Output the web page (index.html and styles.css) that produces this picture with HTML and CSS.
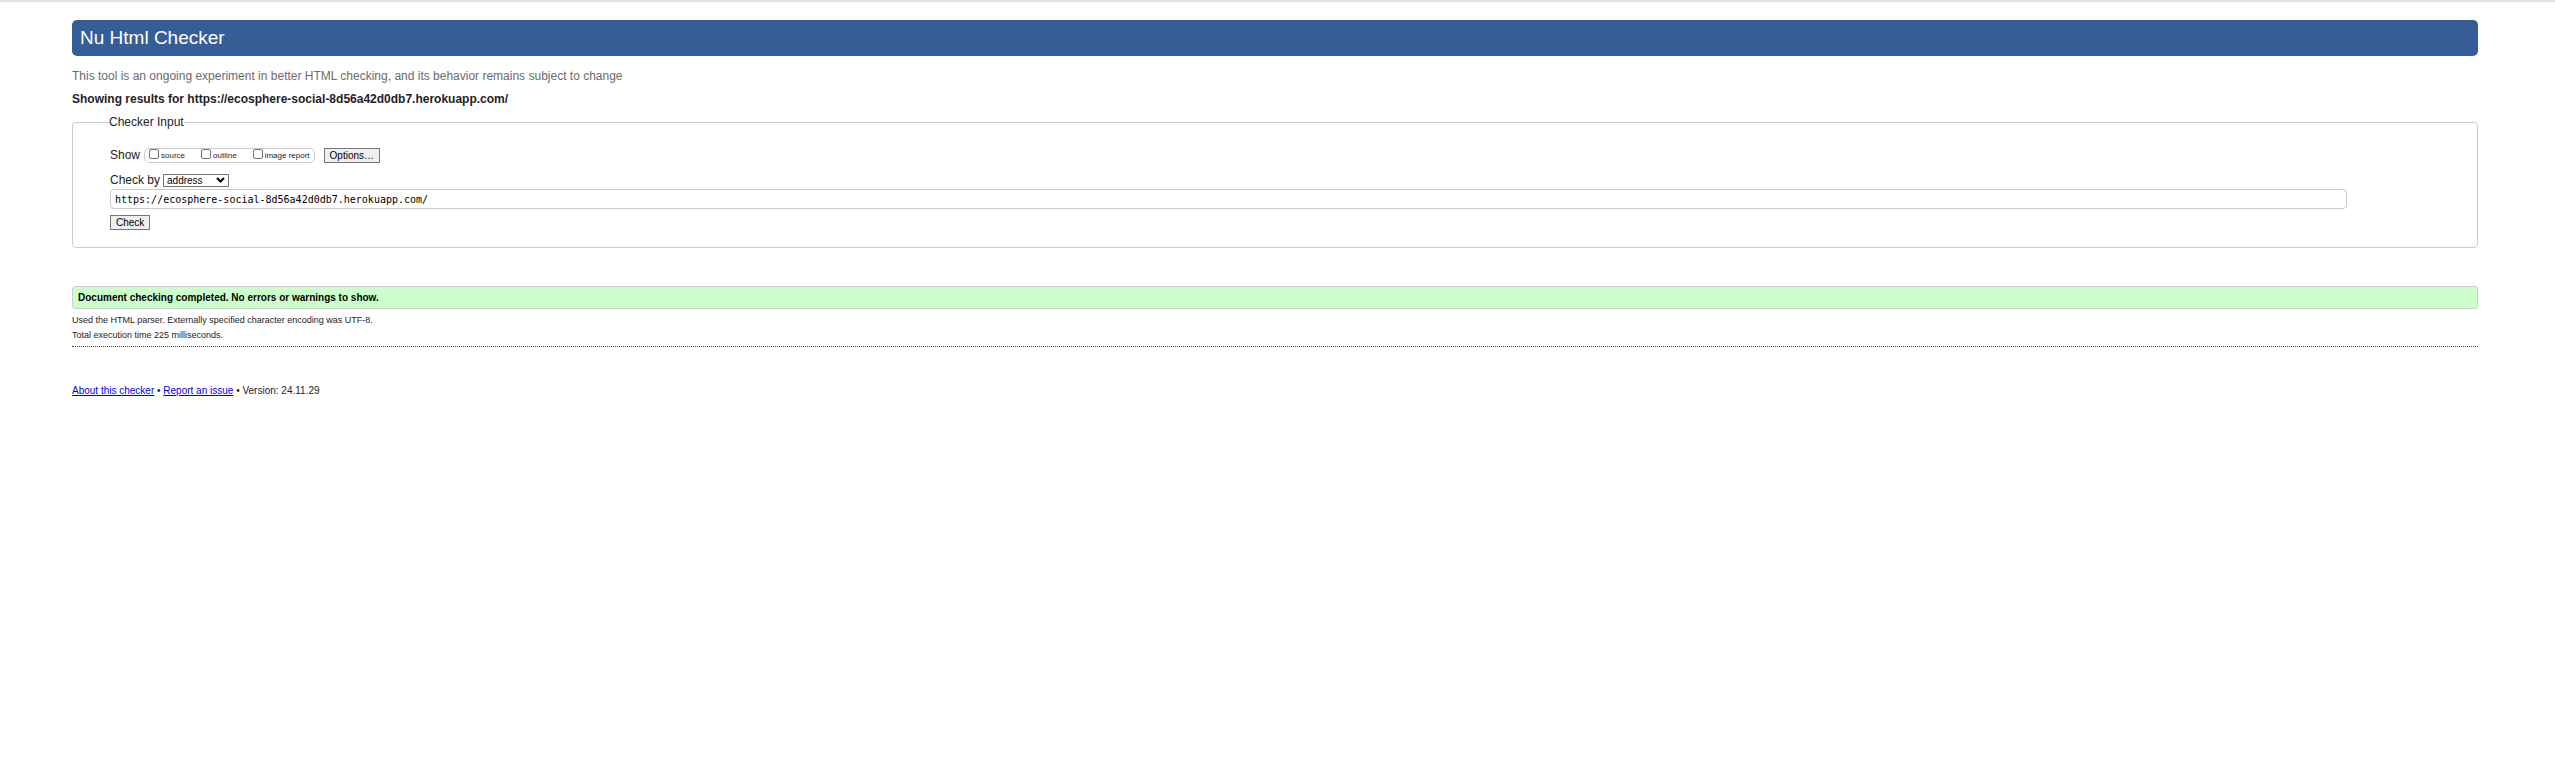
FILE: index.html
```html
<!DOCTYPE html>
<html lang="en">
<head>
<meta charset="utf-8">
<title>Nu Html Checker</title>
<link rel="stylesheet" href="styles.css">
</head>
<body>
<div class="page">
  <header class="banner"><h1 class="banner-title">Nu Html Checker</h1></header>
  <p class="note">This tool is an ongoing experiment in better HTML checking, and its behavior remains subject to change</p>
  <h2 class="subject">Showing results for https://ecosphere-social-8d56a42d0db7.herokuapp.com/</h2>
  <form>
    <fieldset class="checker">
      <legend class="checker-legend">Checker Input</legend>
      <div class="show-row">
        <span>Show</span>
        <div class="checks">
          <label class="check"><input type="checkbox">source</label>
          <label class="check"><input type="checkbox">outline</label>
          <label class="check"><input type="checkbox">image report</label>
        </div>
        <button class="button" type="button">Options…</button>
      </div>
      <div class="by-row">
        <label for="method">Check by</label>
        <span class="select-wrap">
          <select class="method" id="method"><option>address</option><option>file upload</option><option>text input</option></select>
          <svg class="chevron" viewBox="0 0 9 6" aria-hidden="true"><path d="M1 1l3.500 3.500L8 1" fill="none" stroke="#000" stroke-width="2"/></svg>
        </span>
      </div>
      <input class="address" type="url" aria-label="Address" value="https://ecosphere-social-8d56a42d0db7.herokuapp.com/">
      <button class="button submit" type="button">Check</button>
    </fieldset>
  </form>
  <p class="success">Document checking completed. No errors or warnings to show.</p>
  <p class="detail">Used the HTML parser. Externally specified character encoding was UTF-8.</p>
  <p class="detail">Total execution time 225 milliseconds.</p>
  <hr class="rule">
  <footer class="footer"><a href="#about">About this checker</a> • <a href="#issue">Report an issue</a> • Version: 24.11.29</footer>
</div>
</body>
</html>
```
FILE: styles.css
```css
* { box-sizing: border-box; }
body {
  margin: 0;
  background: #fff;
  color: #1f2126;
  font: 12px/16px "Liberation Sans", Arial, sans-serif;
}
.page {
  border-top: 2px solid #e4e4e4;
  padding: 18px 77px 0 72px;
}
.banner {
  padding: 6px 8px;
  border-radius: 5px;
  background: #365d95;
}
.banner-title {
  margin: 0;
  color: #fff;
  font-size: 19px;
  font-weight: 400;
  line-height: 24px;
}
.note { margin: 12px 0 7px; color: #6b6b6b; }
.subject { margin: 0 0 7px; font-size: 12px; line-height: 16px; }
.checker {
  margin: 0;
  padding: 17px 130px 17px 37px;
  border: 1px solid #ccc;
  border-radius: 4px;
}
.checker-legend { margin-left: -1px; padding: 0; line-height: 16px; }
.show-row { display: flex; align-items: center; gap: 4px; height: 16px; }
.checks {
  display: flex;
  gap: 16px;
  height: 15px;
  margin-right: 5px;
  padding: 0 4px;
  border: 1px solid #ccc;
  border-radius: 5px;
}
.check { display: flex; gap: 2px; font-size: 8px; line-height: 14px; }
.check input {
  appearance: none;
  width: 10px;
  height: 10px;
  margin: 0;
  border: 1px solid #767676;
  border-radius: 2px;
  background: #fff;
}
.button {
  display: block;
  height: 15px;
  padding: 0 5px;
  border: 1px solid #767676;
  border-radius: 0;
  background: #efefef;
  color: #000;
  font: 10px/13px "Liberation Sans", Arial, sans-serif;
}
.by-row { display: flex; align-items: center; gap: 3px; margin: 9px 0 1px; }
.select-wrap { display: grid; align-items: center; }
.method {
  grid-area: 1 / 1;
  appearance: none;
  width: 66px;
  height: 13px;
  padding: 0 3px;
  border: 1px solid #767676;
  border-radius: 0;
  background: #fff;
  color: #000;
  font: 10px/11px "Liberation Sans", Arial, sans-serif;
}
.chevron {
  grid-area: 1 / 1;
  justify-self: end;
  width: 9px;
  height: 6px;
  margin-right: 4px;
  pointer-events: none;
}
.address {
  display: block;
  width: 100%;
  height: 20px;
  padding: 0 4px;
  border: 1px solid #ccc;
  border-radius: 4px;
  background: #fff;
  color: #000;
  font: 10px/16px "DejaVu Sans Mono", monospace;
}
.submit { margin-top: 6px; }
.success {
  margin: 38px 0 4px;
  padding: 3px 5px;
  border: 1px solid #ccc;
  border-radius: 3px;
  background: #cfc;
  color: #000;
  font-size: 10px;
  font-weight: 700;
  line-height: 15px;
}
.detail { margin: 0; font-size: 9px; line-height: 15px; }
.rule { margin: 3px 0 0; border: 0; border-top: 1px dotted #444; }
.footer { margin-top: 36px; font-size: 10px; }
.footer a { color: #00e; }
```
